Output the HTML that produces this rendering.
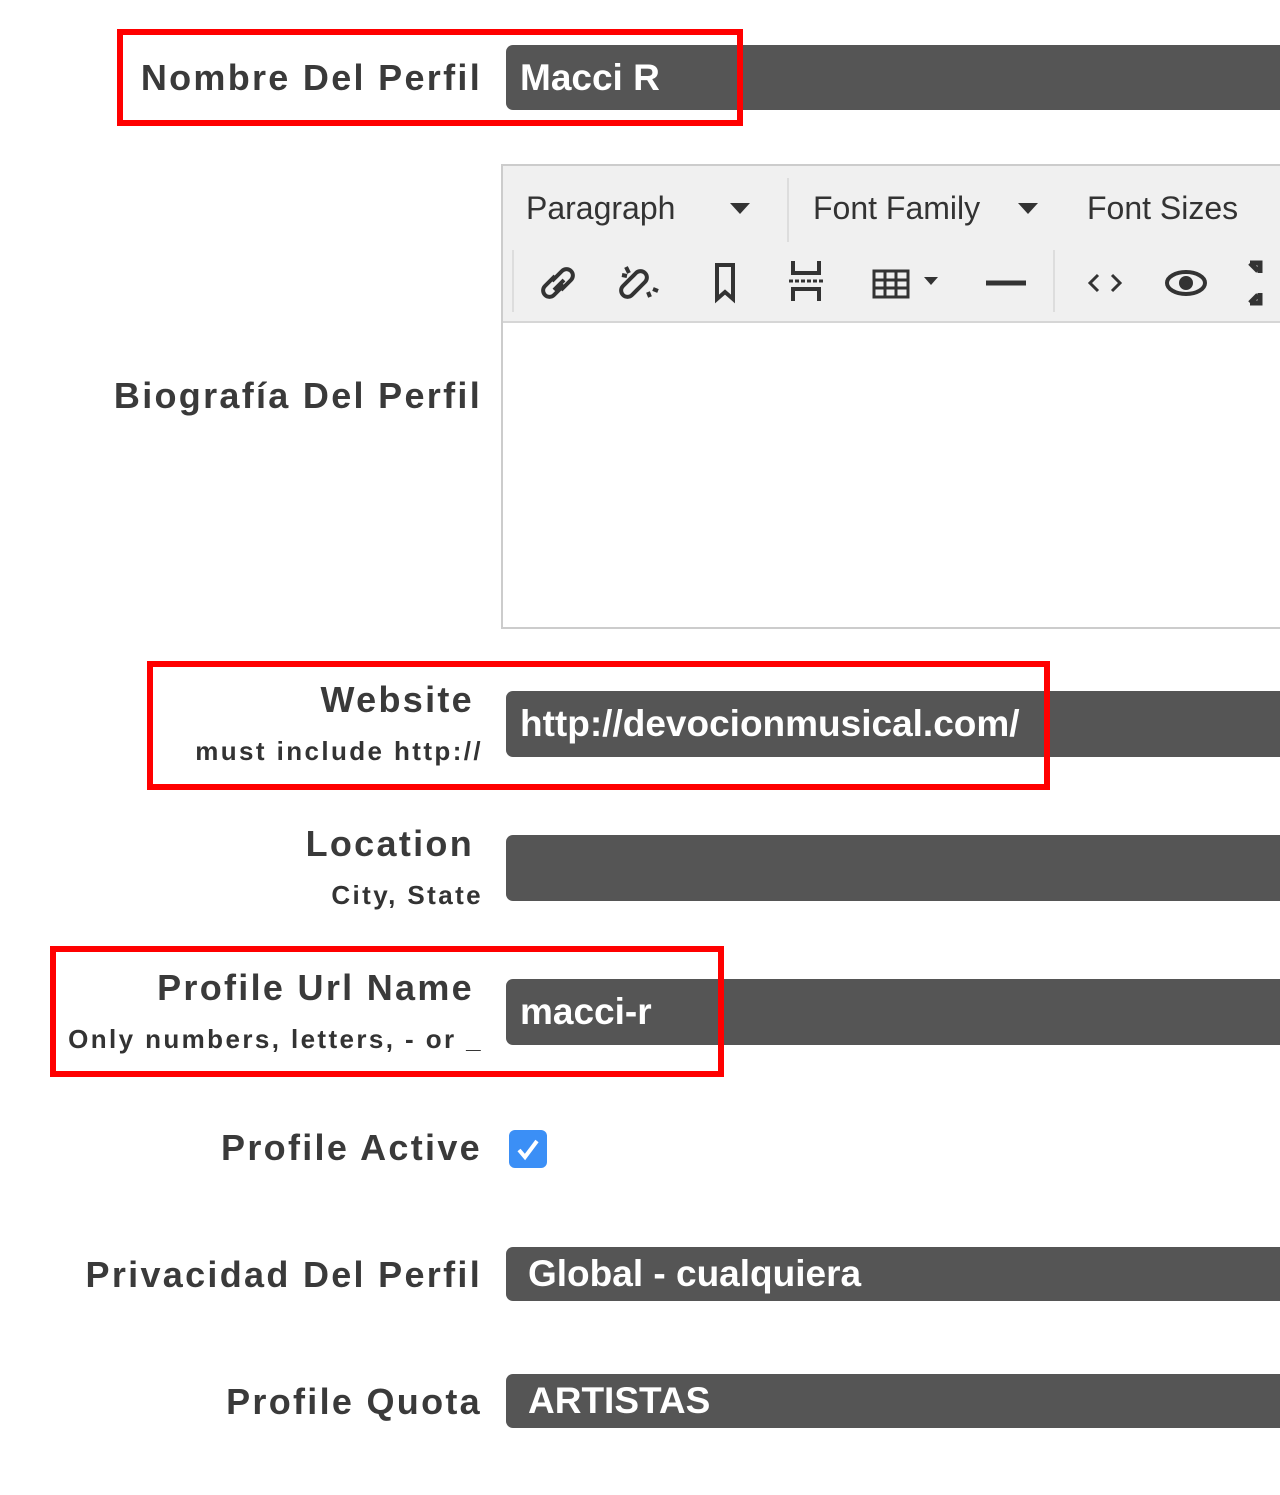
<!DOCTYPE html><html><head><style>
body{margin:0;width:1280px;height:1495px;background:#fff;position:relative;overflow:hidden;font-family:"Liberation Sans",sans-serif;}
.a{position:absolute}
.lab{position:absolute;right:798px;text-align:right;color:#3a3a3a;font-weight:bold;font-size:36px;white-space:nowrap;letter-spacing:2.3px}
.sub{position:absolute;right:797px;text-align:right;color:#333;font-weight:bold;font-size:26px;white-space:nowrap;letter-spacing:2.4px}
.inp{position:absolute;left:506px;width:800px;background:#555;border-radius:7px;color:#fff;font-size:37px;font-weight:bold;box-sizing:border-box;padding-left:14px;letter-spacing:0}
.red{position:absolute;border:6px solid #f00;box-sizing:border-box}
.tb{position:absolute;color:#333;font-size:32px}
</style></head><body>
<div class="lab" style="top:57px">Nombre Del Perfil</div>
<div class="inp" style="top:45px;height:65px;line-height:65px">Macci R</div>
<div class="red" style="left:117px;top:29px;width:626px;height:97px"></div>

<div class="a" style="left:501px;top:164px;width:800px;height:465px;border:2px solid #ccc;box-sizing:border-box;background:#fff"></div>
<div class="a" style="left:503px;top:166px;width:800px;height:155px;background:#f0f0f0;border-bottom:2px solid #d6d6d6"></div>
<div class="tb" style="left:526px;top:190px">Paragraph</div>
<svg class="a" style="left:730px;top:203px" width="20" height="12"><path d="M0 0h20L10 11z" fill="#333"/></svg>
<div class="a" style="left:787px;top:178px;width:2px;height:64px;background:#ddd"></div>
<div class="tb" style="left:813px;top:190px">Font Family</div>
<svg class="a" style="left:1018px;top:203px" width="20" height="12"><path d="M0 0h20L10 11z" fill="#333"/></svg>
<div class="tb" style="left:1087px;top:190px">Font Sizes</div>
<div class="a" style="left:512px;top:250px;width:2px;height:62px;background:#ddd"></div>
<div class="a" style="left:1053px;top:250px;width:2px;height:62px;background:#ddd"></div>
<svg class="a" style="left:530px;top:255px" width="750" height="55" viewBox="0 0 750 55" fill="none" stroke="#333" stroke-width="4">
<path d="M24 35l10-10M22 26l10-10a6 6 0 0 1 9 9l-10 10M34 30l-10 10a6 6 0 0 1-9-9l10-10"/>
<path d="M98 26l8-8a6 6 0 0 1 9 9l-8 8M110 32l-8 8a6 6 0 0 1-9-9l8-8M96 12l3 6M128 36l-5-2M92 20l5 1M120 42l-2-5"/>
<path d="M187 10h16v34l-8-7-8 7z"/>
<path d="M263 6v12h26V6M263 46V34h26v12"/>
<path d="M259 26h34" stroke-width="3" stroke-dasharray="4 2"/>
<rect x="344" y="16" width="34" height="26" stroke-width="3"/><path d="M344 25h34M344 33h34M355 16v26M366 16v26" stroke-width="3"/>
<path d="M394 22h14l-7 8z" fill="#333" stroke="none"/>
<path d="M456 28h40" stroke-width="5"/>
<path d="M568 20l-8 8 8 8M582 20l8 8-8 8" stroke-width="3"/>
<ellipse cx="656" cy="28" rx="19" ry="11"/><circle cx="656" cy="28" r="5" fill="#333"/>
<path d="M720 8h10v10M720 8l8 8M720 48h10V38M720 48l8-8" stroke-width="5"/>
</svg>
<div class="lab" style="top:375px">Biografía Del Perfil</div>

<div class="lab" style="top:679px;right:806px">Website</div>
<div class="sub" style="top:736px">must include http://</div>
<div class="inp" style="top:691px;height:66px;line-height:66px">http://devocionmusical.com/</div>
<div class="red" style="left:147px;top:661px;width:903px;height:129px"></div>

<div class="lab" style="top:823px;right:806px">Location</div>
<div class="sub" style="top:880px">City, State</div>
<div class="inp" style="top:835px;height:66px"></div>

<div class="lab" style="top:967px;right:806px">Profile Url Name</div>
<div class="sub" style="top:1024px">Only numbers, letters, - or _</div>
<div class="inp" style="top:979px;height:66px;line-height:66px">macci-r</div>
<div class="red" style="left:50px;top:946px;width:674px;height:131px"></div>

<div class="lab" style="top:1127px">Profile Active</div>
<div class="a" style="left:509px;top:1130px;width:38px;height:38px;background:#3b8ff6;border-radius:6px"></div>
<svg class="a" style="left:509px;top:1130px" width="38" height="38"><path d="M10 20l6 7 12-16" stroke="#fff" stroke-width="4" fill="none"/></svg>

<div class="lab" style="top:1254px">Privacidad Del Perfil</div>
<div class="inp" style="top:1247px;height:54px;line-height:54px;padding-left:22px">Global - cualquiera</div>

<div class="lab" style="top:1381px">Profile Quota</div>
<div class="inp" style="top:1374px;height:54px;line-height:54px;padding-left:22px">ARTISTAS</div>
</body></html>
